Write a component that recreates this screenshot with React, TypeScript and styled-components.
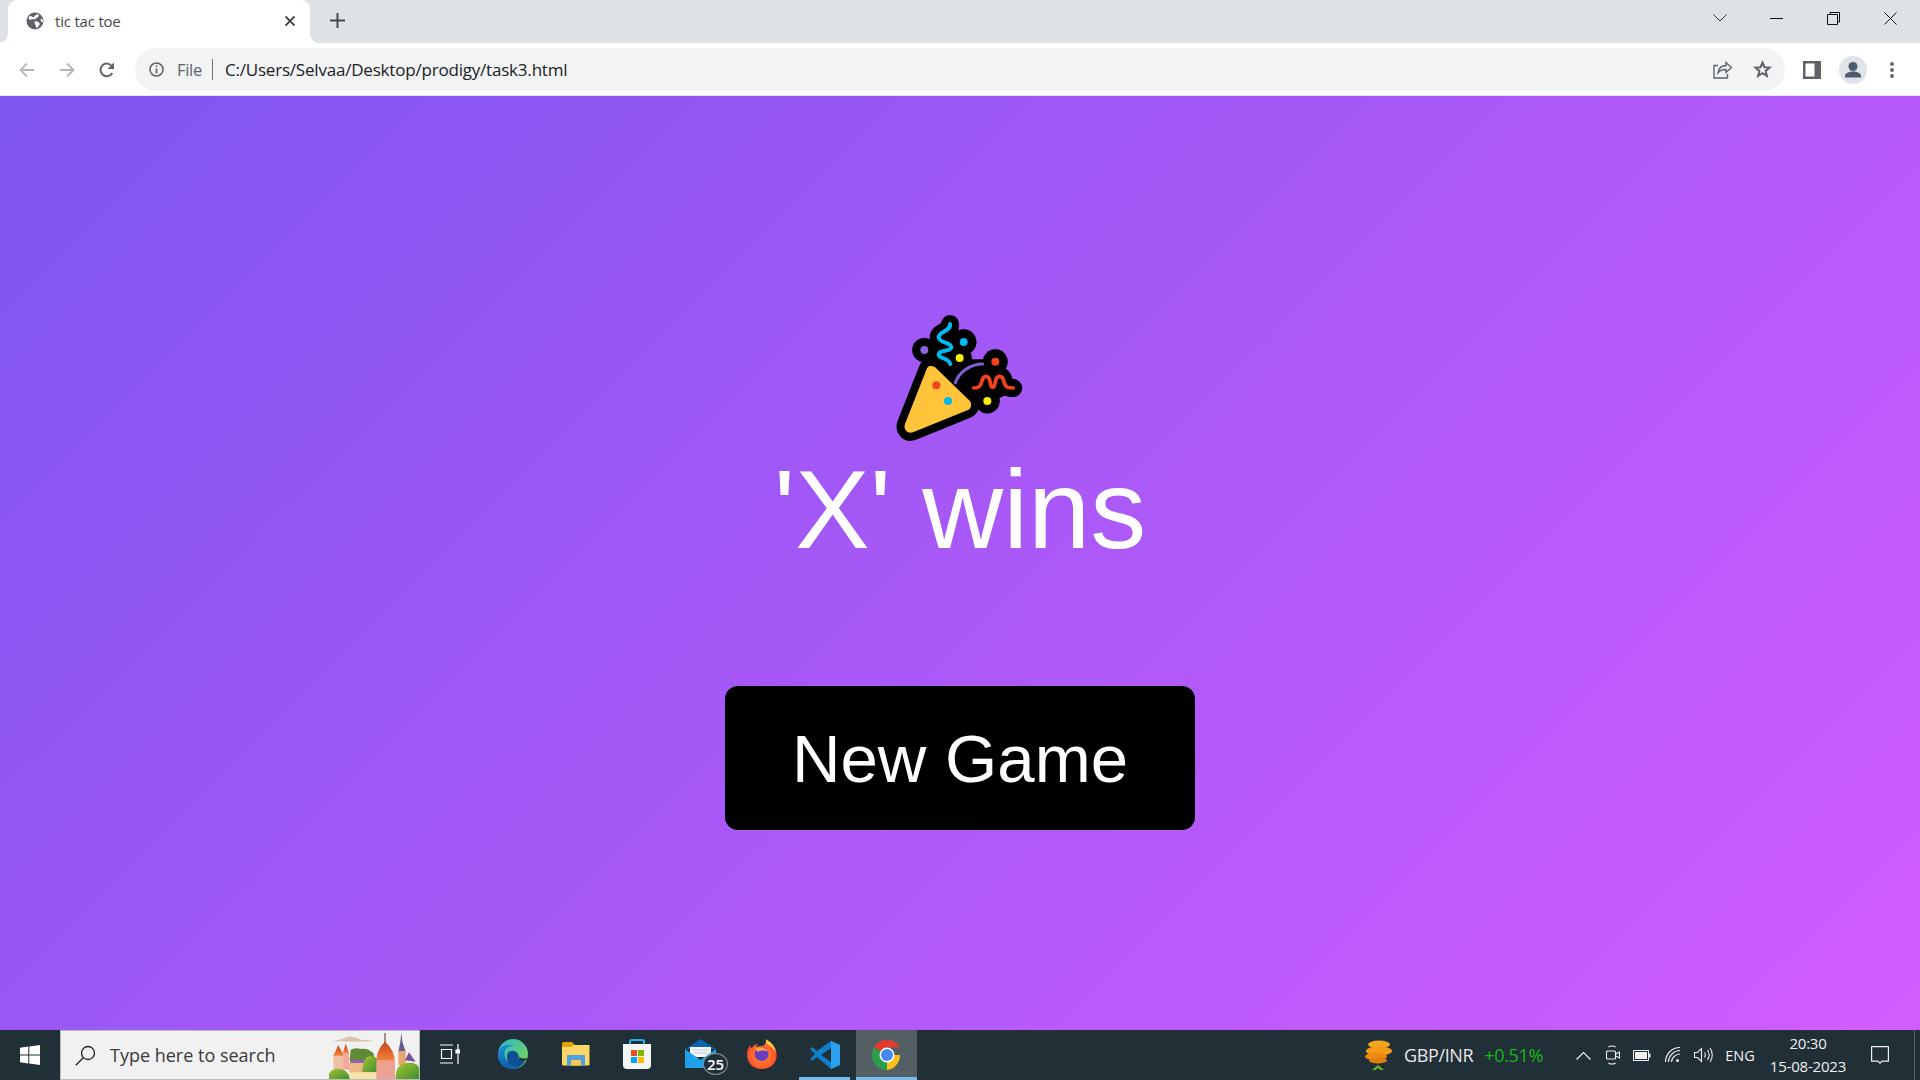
import React from "react";
import styled, { createGlobalStyle } from "styled-components";

const Global = createGlobalStyle`
  html, body { margin: 0; padding: 0; height: 100%; overflow: hidden; }
  #root { height: 100%; }
`;

const Screen = styled.div`
  width: 1920px;
  height: 1080px;
  display: flex;
  flex-direction: column;
  overflow: hidden;
`;

const TabStrip = styled.div`
  height: 43px;
  flex: none;
  background: #dee1e6;
  display: flex;
  align-items: stretch;
  padding-left: 8px;
`;

const Tab = styled.div`
  width: 302px;
  background: #fff;
  border-radius: 9px 9px 0 0;
  display: flex;
  align-items: center;
  padding: 0 14px 2px 18px;
  box-sizing: border-box;
  gap: 11px;
  position: relative;
  &::before,
  &::after {
    content: "";
    position: absolute;
    bottom: 0;
    width: 9px;
    height: 9px;
  }
  &::before {
    left: -9px;
    background: radial-gradient(circle at 0 0, #dee1e6 8.5px, #fff 9px);
  }
  &::after {
    right: -9px;
    background: radial-gradient(circle at 100% 0, #dee1e6 8.5px, #fff 9px);
  }
`;

const TabTitle = styled.span`
  flex: 1;
  font: 15px "Open Sans", sans-serif;
  color: #45484c;
  letter-spacing: -0.2px;
`;

const NewTab = styled.div`
  width: 55px;
  display: flex;
  align-items: center;
  justify-content: center;
  padding-bottom: 2px;
`;

const Spacer = styled.div`
  flex: 1;
`;

const WindowControls = styled.div`
  display: flex;
  align-items: center;
  padding-right: 1px;
  padding-bottom: 7px;
`;

const WindowButton = styled.div<{ $w: number }>`
  width: ${(p) => p.$w}px;
  display: flex;
  justify-content: center;
`;

const Toolbar = styled.div`
  height: 52px;
  flex: none;
  background: #fff;
  display: flex;
  align-items: center;
  padding: 1px 11px 0 7px;
  box-sizing: border-box;
`;

const NavButton = styled.div`
  width: 40px;
  height: 33px;
  display: flex;
  align-items: center;
  justify-content: center;
`;

const Omnibox = styled.div`
  flex: 1;
  height: 43px;
  margin-left: 8px;
  margin-right: 8px;
  border-radius: 22px;
  background: #f1f3f4;
  display: flex;
  align-items: center;
  padding: 0 3px 0 14px;
`;

const FileLabel = styled.span`
  font: 16.5px "Open Sans", sans-serif;
  letter-spacing: -0.3px;
  color: #5f6368;
  margin-left: 13px;
`;

const Separator = styled.span`
  width: 1px;
  height: 21px;
  background: #70757a;
  margin: 0 12px 0 10px;
`;

const Url = styled.span`
  flex: 1;
  font: 17px "Open Sans", sans-serif;
  letter-spacing: -0.2px;
  color: #202124;
`;

const OmniIcon = styled.div`
  width: 40px;
  display: flex;
  justify-content: center;
`;

const ToolIcon = styled.div<{ $w: number }>`
  width: ${(p) => p.$w}px;
  display: flex;
  justify-content: center;
  align-items: center;
`;

const Stage = styled.main`
  flex: 1;
  min-height: 0;
  background: linear-gradient(135deg, #7e55ef, #d25cff);
  display: flex;
  flex-direction: column;
  align-items: center;
  padding-top: 204px;
  box-sizing: border-box;
  border-top: 1px solid #e9e4f7;
`;

const Party = styled.svg`
  width: 160px;
  height: 150px;
  display: block;
  flex: none;
`;

const Winner = styled.h1`
  margin: -4px 0 0;
  font: 400 112px/128px "Liberation Sans", Arial, sans-serif;
  color: #fff;
`;

const NewGame = styled.button`
  width: 470px;
  height: 144px;
  margin-top: 112px;
  background: #000;
  color: #fff;
  border: 0;
  border-radius: 13px;
  font: 400 67.2px "Liberation Sans", Arial, sans-serif;
  padding: 0;
`;

const Taskbar = styled.footer`
  height: 50px;
  flex: none;
  background: #212f37;
  display: flex;
  align-items: stretch;
  color: #fff;
`;

const StartButton = styled.div`
  width: 60px;
  display: flex;
  align-items: center;
  justify-content: center;
`;

const SearchBox = styled.div`
  width: 360px;
  box-sizing: border-box;
  background: #f1f1f1;
  border: 1px solid #bdbdbd;
  display: flex;
  align-items: center;
  padding-left: 14px;
  position: relative;
  overflow: hidden;
`;

const SearchText = styled.span`
  font: 18px "Open Sans", sans-serif;
  color: #3a3a3a;
  margin-left: 14px;
  flex: 1;
`;

const VillageArt = styled.svg`
  position: absolute;
  right: 0;
  bottom: 0;
  width: 90px;
  height: 50px;
`;

const AppSlot = styled.div<{ $w: number; $active?: boolean; $open?: boolean }>`
  width: ${(p) => p.$w}px;
  display: flex;
  align-items: center;
  justify-content: center;
  box-sizing: border-box;
  background: ${(p) => (p.$active ? "#545f63" : "transparent")};
  border-bottom: 3px solid ${(p) => (p.$open ? "#76b9ed" : "transparent")};
  padding-top: ${(p) => (p.$open ? 3 : 0)}px;
  position: relative;
`;

const SlotGap = styled.div<{ $w: number }>`
  width: ${(p) => p.$w}px;
  flex: none;
`;

const Badge = styled.span`
  position: absolute;
  left: 35px;
  top: 23px;
  width: 25px;
  height: 22px;
  box-sizing: border-box;
  border-radius: 50%;
  background: #212f37;
  border: 1px solid #8b9499;
  font: 600 15px/20px "Open Sans", sans-serif;
  text-align: center;
  color: #fff;
`;

const Tray = styled.div`
  display: flex;
  align-items: center;
  flex: 1;
  justify-content: flex-end;
`;

const Pair = styled.span`
  font: 18px "Open Sans", sans-serif;
  letter-spacing: -0.35px;
  color: #e8e8e8;
  margin-left: 12px;
`;

const Change = styled.span`
  font: 18px "Open Sans", sans-serif;
  letter-spacing: -0.35px;
  color: #16b916;
  margin-left: 11px;
  margin-right: 23px;
`;

const TrayIcon = styled.div<{ $w: number }>`
  width: ${(p) => p.$w}px;
  display: flex;
  align-items: center;
  justify-content: center;
`;

const Lang = styled.span`
  width: 36px;
  text-align: center;
  font: 14.5px "Open Sans", sans-serif;
  color: #f0f0f0;
  margin-left: 4px;
`;

const Clock = styled.div`
  width: 86px;
  margin: 0 10px 0 7px;
  text-align: center;
  font: 15px/23px "Open Sans", sans-serif;
  color: #f0f0f0;
  letter-spacing: -0.2px;
`;

const Notify = styled.div`
  width: 38px;
  margin-right: 15px;
  display: flex;
  justify-content: center;
`;

const Grip = styled.div`
  width: 1px;
  align-self: stretch;
  background: #56626a;
  margin-right: 5px;
`;

const Back = () => (
  <svg width="18" height="18" viewBox="0 0 18 18" fill="none" stroke="#b4b6b9" strokeWidth="1.8">
    <path d="M16 9H3M9 2.5 2.5 9 9 15.5" />
  </svg>
);
const Forward = () => (
  <svg width="18" height="18" viewBox="0 0 18 18" fill="none" stroke="#b4b6b9" strokeWidth="1.8">
    <path d="M2 9h13M9 2.5 15.5 9 9 15.5" />
  </svg>
);
const Reload = () => (
  <svg width="18" height="18" viewBox="0 0 18 18" fill="none">
    <path d="M14.3 12a6.3 6.3 0 1 1-.3-6.700" stroke="#5f6368" strokeWidth="2" />
    <path d="M16 1.500V8H9.500z" fill="#5f6368" />
  </svg>
);

const Globe = () => (
  <svg width="18" height="18" viewBox="0 0 18 18">
    <circle cx="9" cy="9" r="8.5" fill="#5f6368" />
    <path d="M3 4.500 5 4l2.500 1.500L9 3.500 12 2l1 2-2.500 2-2 1.500L6 7 4 8 2.500 6.500zM9 9l3.500 1 1.500 2-2 3-1.500 1L9.500 13 8.500 11zM14.500 6.500l2 1 .5 3-2-1z" fill="#fff" />
  </svg>
);

const BLUE_SQUIGGLE = "M210 72c4 22-34 22-34 40 0 18 38 14 38 30 0 14-38 6-38 22 0 12 30 8 35 28";
const RED_SQUIGGLE =
  "M281 264c12 0 20-2 23-15 3-12 5-20 14-20 9 0 11 8 13 20 1 8 3 13 7 13 4 0 6-5 7-13 2-12 4-20 14-20 9 0 11 8 14 20 3 13 12 15 27 15";
const CONE = "M150 198c-4 1-8 4-10 9L75 372c-6 16 8 31 24 25l163-66c12-5 15-19 7-29L170 206c-5-6-12-9-20-8z";
const ARC = "M226 248c10-30 44-56 82-56";

const PartyPopper = () => (
  <Party viewBox="0 0 480 450" aria-hidden="true">
    <g fill="#000" stroke="#000" strokeLinecap="round" strokeLinejoin="round">
      <path d="M170 100 260 120 250 190 345 190 395 262 322 300 260 290 190 210z" strokeWidth="24" />
      <path d={BLUE_SQUIGGLE} fill="none" strokeWidth="54" />
      <path d={RED_SQUIGGLE} fill="none" strokeWidth="54" />
      <path d={CONE} strokeWidth="48" />
      <circle cx="133" cy="150" r="36" />
      <circle cx="251" cy="126" r="38" />
      <circle cx="239" cy="174" r="36" />
      <circle cx="346" cy="185" r="37" />
      <circle cx="322" cy="303" r="37" />
    </g>
    <path d={CONE} fill="#ffc43a" />
    <circle cx="169" cy="256" r="12" fill="#f4411e" />
    <circle cx="204" cy="303" r="12" fill="#00b9f1" />
    <circle cx="133" cy="150" r="12" fill="#8a63dc" />
    <circle cx="251" cy="126" r="12" fill="#00b9f1" />
    <circle cx="239" cy="174" r="12" fill="#fff200" />
    <circle cx="346" cy="185" r="12" fill="#f4411e" />
    <circle cx="322" cy="303" r="12" fill="#fff200" />
    <path d={BLUE_SQUIGGLE} fill="none" stroke="#00b9f1" strokeWidth="12" strokeLinecap="round" />
    <path d={RED_SQUIGGLE} fill="none" stroke="#f4411e" strokeWidth="11" strokeLinecap="round" />
    <path d={ARC} fill="none" stroke="#7f5fd8" strokeWidth="9" strokeLinecap="round" />
  </Party>
);

const Village = () => (
  <VillageArt viewBox="30 6 270 150" aria-hidden="true">
    <defs>
      <linearGradient id="roof" x1="0" y1="0" x2="0" y2="1">
        <stop offset="0" stopColor="#c9431d" />
        <stop offset="1" stopColor="#f08a3c" />
      </linearGradient>
      <linearGradient id="bush" x1="0" y1="0" x2="1" y2="1">
        <stop offset="0" stopColor="#a8c431" />
        <stop offset="1" stopColor="#3f8f2f" />
      </linearGradient>
    </defs>
    <path d="M40 42q30-4 36-8 12-8 28-4 14 2 20 8 24 0 41 4-60 5-125 0z" fill="#d9c3ad" />
    <path d="M95 68q14-8 30-2 20-4 38 12l5 24H92z" fill="#5f8a37" />
    <path d="M90 110l8-12h42l6 12z" fill="#8d62a8" />
    <rect x="90" y="108" width="82" height="48" fill="#eeb98a" />
    <rect x="90" y="136" width="82" height="20" fill="#f4e4a8" />
    <path d="M42 88 58 55 76 88z" fill="url(#roof)" />
    <rect x="43" y="86" width="32" height="46" fill="#eec0a4" />
    <path d="M71 80 80 50 91 80z" fill="url(#roof)" />
    <rect x="73" y="78" width="17" height="50" fill="#f2a99c" />
    <path d="M130 135q0-40 20-48 16-2 25 8v40z" fill="url(#bush)" />
    <rect x="196" y="18" width="4" height="30" fill="#7c5e4d" />
    <path d="M172 104q0-36 26-60 28 24 30 60z" fill="url(#roof)" />
    <rect x="172" y="100" width="56" height="56" fill="#eda193" />
    <path d="M238 74l6-30 3-28 3 28 10 30z" fill="#6b5b8c" />
    <rect x="238" y="72" width="22" height="42" fill="#e3a86f" />
    <path d="M258 100l12-24 20 28z" fill="#7a4f9c" />
    <path d="M230 156q-2-42 30-48 36-4 40 16v32z" fill="url(#bush)" />
    <path d="M28 156q0-30 28-31 32 0 36 31z" fill="url(#bush)" />
  </VillageArt>
);

const Edge = () => (
  <svg width="30" height="30" viewBox="0 0 30 30">
    <defs>
      <linearGradient id="e1" x1="0" y1="0" x2="1" y2="1">
        <stop offset="0" stopColor="#2bb6c9" />
        <stop offset="1" stopColor="#7fd94f" />
      </linearGradient>
      <linearGradient id="e2" x1="0" y1="0" x2="0" y2="1">
        <stop offset="0" stopColor="#1b8fd8" />
        <stop offset="1" stopColor="#0c5fa8" />
      </linearGradient>
    </defs>
    <circle cx="15" cy="15" r="15" fill="url(#e1)" />
    <path d="M0 15C1 6 10 4 16 7c-7 0-11 3-9 11 2 7 13 9 20 5-5 7-11 7-14 7C6 30 0 24 0 15z" fill="url(#e2)" />
    <path d="M9 17c0-6 8-7 11-2 2 4-2 4 2 5h6c-3 6-8 9-13 7-5-2-6-6-6-10z" fill="#0d4f94" />
    <path d="M20 17c3 3 7 3 10 2-1 3-5 3-8 2z" fill="#212f37" />
  </svg>
);

const Explorer = () => (
  <svg width="28" height="24" viewBox="0 0 28 24">
    <path d="M0 1.500C0 .7.7 0 1.500 0H10l3 3h13v18a1 1 0 0 1-1 1H1a1 1 0 0 1-1-1z" fill="#e0a30c" />
    <path d="M0 5h9l3-2h15.500v19.500a1 1 0 0 1-1 1H1a1 1 0 0 1-1-1z" fill="#fcd766" />
    <path d="M5 23.500V13h18v10.500h-4V18H9v5.500z" fill="#4d9fe0" />
    <rect x="9" y="18" width="10" height="5.500" fill="#f7c94d" />
  </svg>
);

const Store = () => (
  <svg width="30" height="30" viewBox="0 0 30 30">
    <path d="M8 6V2.500C8 1.500 9 1 10 1h10c1 0 2 .5 2 1.500V6" fill="none" stroke="#23b2e8" strokeWidth="2" />
    <path d="M1 5h28v21a4 4 0 0 1-4 4H5a4 4 0 0 1-4-4z" fill="#f5f5f5" />
    <rect x="9" y="11" width="6" height="6" fill="#ea4f23" />
    <rect x="16" y="11" width="6" height="6" fill="#7cb800" />
    <rect x="9" y="18" width="6" height="6" fill="#00a5ef" />
    <rect x="16" y="18" width="6" height="6" fill="#ffb900" />
  </svg>
);

const Mail = () => (
  <svg width="31" height="29" viewBox="0 0 31 29">
    <path d="M0 10 15.500 0 31 10z" fill="#0a62b0" />
    <path d="M5 8h21v10H5z" fill="#f5f5f5" />
    <path d="M8 11h15M8 14h15" stroke="#bbccdd" strokeWidth="1" />
    <path d="M0 10l15.500 11L31 10v19H0z" fill="#1ea1ea" />
  </svg>
);

const Firefox = () => (
  <svg width="30" height="30" viewBox="0 0 30 30">
    <defs>
      <radialGradient id="ff" cx=".5" cy=".55" r=".6">
        <stop offset="0" stopColor="#ff9a2e" />
        <stop offset=".7" stopColor="#ff5a2a" />
        <stop offset="1" stopColor="#e5234a" />
      </radialGradient>
    </defs>
    <path d="M19 0c1 4 9 6 10.500 14C31 23 24 30 15 30 6 30 0 24 0 15c0-3 1-6 3-9 0 2 1 3 2 3 1-2 3-4 6-4-1 1-2 2-2 3 3-1 7 0 9-3 1-2 1-3 1-5z" fill="url(#ff)" />
    <circle cx="14.500" cy="15" r="7" fill="#6b3dc4" />
    <path d="M8 10c4-3 11-2 13 3-3-2-8-2-10 0z" fill="#ffa436" />
    <path d="M19 0c4 3 9 6 10 13-3-4-7-7-10-9z" fill="#ffcc3d" />
  </svg>
);

const VSCode = () => (
  <svg width="30" height="30" viewBox="0 0 30 30">
    <path d="M21 1 30 5v20l-9 4-14-12-5 4-2-2 5-5-5-5 2-2 5 4z" fill="#0f7fcb" />
    <path d="M21 1 30 5v20l-9 4z" fill="#2aa1ec" />
    <path d="M21 8 11 15l10 7z" fill="#212f37" />
  </svg>
);

const Chrome = () => (
  <svg width="30" height="30" viewBox="0 0 30 30">
    <path d="M15 15 2 7.500A15 15 0 0 1 28 7.500H15z" fill="#e33b2e" />
    <path d="M15 15 15 30A15 15 0 0 1 2 7.500z" fill="#2b9e49" />
    <path d="M15 15H28A15 15 0 0 1 15 30z" fill="#fbc116" />
    <circle cx="15" cy="15" r="7.500" fill="#fff" />
    <circle cx="15" cy="15" r="6" fill="#4489f1" />
  </svg>
);

const Coins = () => (
  <svg width="28" height="30" viewBox="0 0 28 30">
    <ellipse cx="15" cy="4.500" rx="11" ry="4" fill="#f2a51f" />
    <ellipse cx="15" cy="11" rx="13" ry="4.500" fill="#f79a18" />
    <ellipse cx="12" cy="16.500" rx="11" ry="4" fill="#ee8a12" />
    <ellipse cx="14" cy="20.500" rx="9" ry="3" fill="#e07e10" />
    <path d="M8 30l6-5 6 5h-3.500L14 28l-2.500 2z" fill="#6bb521" />
  </svg>
);

export default function App() {
  return (
    <Screen>
      <Global />
      <TabStrip>
        <Tab>
          <Globe />
          <TabTitle>tic tac toe</TabTitle>
          <svg width="12" height="12" viewBox="0 0 12 12" stroke="#45484c" strokeWidth="1.800">
            <path d="M1.500 1.500l9 9M10.500 1.500l-9 9" />
          </svg>
        </Tab>
        <NewTab>
          <svg width="15" height="15" viewBox="0 0 15 15" stroke="#45484c" strokeWidth="2">
            <path d="M7.500 0v15M0 7.500h15" />
          </svg>
        </NewTab>
        <Spacer />
        <WindowControls>
          <WindowButton $w={57}>
            <svg width="14" height="8" viewBox="0 0 14 8" fill="none" stroke="#333" strokeWidth="1">
              <path d="M.5.500 7 7 13.500.500" />
            </svg>
          </WindowButton>
          <WindowButton $w={57}>
            <svg width="13" height="1" viewBox="0 0 13 1">
              <rect width="13" height="1" fill="#111" />
            </svg>
          </WindowButton>
          <WindowButton $w={57}>
            <svg width="13" height="13" viewBox="0 0 13 13" fill="none" stroke="#111" strokeWidth="1">
              <path d="M3 2.500V.500h9.500V10H10.500M.500 2.500h10v10H.500z" />
            </svg>
          </WindowButton>
          <WindowButton $w={57}>
            <svg width="13" height="13" viewBox="0 0 13 13" stroke="#111" strokeWidth="1">
              <path d="M.5.500l12 12M12.500.500l-12 12" />
            </svg>
          </WindowButton>
        </WindowControls>
      </TabStrip>
      <Toolbar>
        <NavButton>
          <Back />
        </NavButton>
        <NavButton>
          <Forward />
        </NavButton>
        <NavButton>
          <Reload />
        </NavButton>
        <Omnibox>
          <svg width="15" height="15" viewBox="0 0 15 15" fill="none">
            <circle cx="7.500" cy="7.500" r="6.500" stroke="#5f6368" strokeWidth="1.500" />
            <path d="M7.500 6.500V11.500M7.500 3.500v1.600" stroke="#5f6368" strokeWidth="1.700" />
          </svg>
          <FileLabel>File</FileLabel>
          <Separator />
          <Url>C:/Users/Selvaa/Desktop/prodigy/task3.html</Url>
          <OmniIcon>
            <svg width="19" height="19" viewBox="0 0 19 19" fill="none" stroke="#5f6368" strokeWidth="1.400">
              <path d="M5 5.500H1v12.500h13.500v-4" />
              <path d="M5 13c0-5 4-7.500 8-7.500V2.500l5.500 5-5.500 5V9.500c-4 0-6.500 1-8 3.500z" />
            </svg>
          </OmniIcon>
          <OmniIcon>
            <svg width="19" height="19" viewBox="0 0 19 19" fill="none" stroke="#5f6368" strokeWidth="2">
              <path d="M9.500 2.500l2 4.700 5 .4-3.800 3.300 1.200 5-4.400-2.700-4.400 2.700 1.200-5L2.500 7.600l5-.4z" />
            </svg>
          </OmniIcon>
        </Omnibox>
        <ToolIcon $w={38}>
          <svg width="18" height="18" viewBox="0 0 18 18">
            <rect width="18" height="18" fill="#5f6368" />
            <rect x="2.500" y="2.500" width="9" height="13" fill="#fff" />
          </svg>
        </ToolIcon>
        <ToolIcon $w={44}>
          <svg width="28" height="28" viewBox="0 0 28 28">
            <circle cx="14" cy="14" r="14" fill="#e0e3e7" />
            <circle cx="14" cy="10.500" r="4.500" fill="#4d5b6f" />
            <path d="M6 20c0-3 4-4.500 8-4.500s8 1.500 8 4.500v1.500H6z" fill="#4d5b6f" />
          </svg>
        </ToolIcon>
        <ToolIcon $w={34}>
          <svg width="4" height="16" viewBox="0 0 4 16" fill="#5f6368">
            <circle cx="2" cy="2" r="1.900" />
            <circle cx="2" cy="8" r="1.900" />
            <circle cx="2" cy="14" r="1.900" />
          </svg>
        </ToolIcon>
      </Toolbar>
      <Stage>
        <PartyPopper />
        <Winner>'X' wins</Winner>
        <NewGame>New Game</NewGame>
      </Stage>
      <Taskbar>
        <StartButton>
          <svg width="20" height="20" viewBox="0 0 20 20" fill="#fff">
            <path d="M0 2.800 8.300 1.600v7.900H0zM9.300 1.500 20 0v9.500H9.300zM0 10.500h8.300v7.900L0 17.200zM9.300 10.500H20V20L9.300 18.500z" />
          </svg>
        </StartButton>
        <SearchBox>
          <svg width="21" height="21" viewBox="0 0 21 21" fill="none" stroke="#222" strokeWidth="1.300">
            <circle cx="13" cy="8" r="6.500" />
            <path d="M8.300 12.700.8 20.200" />
          </svg>
          <SearchText>Type here to search</SearchText>
          <Village />
        </SearchBox>
        <AppSlot $w={60}>
          <svg width="20" height="20" viewBox="0 0 20 20" fill="none" stroke="#fff" strokeWidth="1.200">
            <path d="M0 1h13M0 19h13M1.500 5.500h10v9h-10zM18 0v6M18 10v10" />
            <rect x="16" y="6" width="3.500" height="3" fill="#fff" />
          </svg>
        </AppSlot>
        <AppSlot $w={66}>
          <Edge />
        </AppSlot>
        <AppSlot $w={60}>
          <Explorer />
        </AppSlot>
        <AppSlot $w={62}>
          <Store />
        </AppSlot>
        <AppSlot $w={64}>
          <Mail />
          <Badge>25</Badge>
        </AppSlot>
        <AppSlot $w={60}>
          <Firefox />
        </AppSlot>
        <SlotGap $w={7} />
        <AppSlot $w={51} $open>
          <VSCode />
        </AppSlot>
        <SlotGap $w={6} />
        <AppSlot $w={61} $active $open>
          <Chrome />
        </AppSlot>
        <Tray>
          <Coins />
          <Pair>GBP/INR</Pair>
          <Change>+0.51%</Change>
          <TrayIcon $w={34}>
            <svg width="15" height="9" viewBox="0 0 15 9" fill="none" stroke="#f0f0f0" strokeWidth="1.200">
              <path d="M.5 8.500 7.500 1.500 14.500 8.500" />
            </svg>
          </TrayIcon>
          <TrayIcon $w={26}>
            <svg width="14" height="20" viewBox="0 0 14 20" fill="none" stroke="#f0f0f0" strokeWidth="1.100">
              <path d="M2.500 2C4 .6 8 .6 9.500 2M2.500 18C4 19.400 8 19.400 9.500 18" />
              <rect x=".5" y="6" width="9" height="8" rx="1" />
              <path d="M9.500 9l4-2v6l-4-2" />
            </svg>
          </TrayIcon>
          <TrayIcon $w={32}>
            <svg width="18" height="11" viewBox="0 0 18 11" fill="none">
              <rect x=".5" y=".5" width="15" height="10" stroke="#f0f0f0" />
              <rect x="2" y="2" width="12" height="7" fill="#f0f0f0" />
              <rect x="16" y="3.500" width="1.500" height="4" fill="#f0f0f0" />
            </svg>
          </TrayIcon>
          <TrayIcon $w={30}>
            <svg width="16" height="16" viewBox="0 0 16 16" fill="none" stroke="#f0f0f0" strokeWidth="1.100">
              <path d="M.5 15C.5 7 7 .5 15 .5M3.500 15C3.500 9 9 3.500 15 3.500M6.500 15c0-4 4-8 8.500-8" />
              <circle cx="12.500" cy="13.500" r="1.500" fill="#f0f0f0" stroke="none" />
            </svg>
          </TrayIcon>
          <TrayIcon $w={30}>
            <svg width="19" height="16" viewBox="0 0 19 16" fill="none" stroke="#f0f0f0" strokeWidth="1.100">
              <path d="M.5 5.500h3l4-4v13l-4-4h-3zM10.500 5.500c1 1.500 1 3.500 0 5M13.500 3c2 3 2 7 0 10M16 1c3 4 3 10 0 14" />
            </svg>
          </TrayIcon>
          <Lang>ENG</Lang>
          <Clock>
            20:30
            <br />
            15-08-2023
          </Clock>
          <Notify>
            <svg width="18" height="18" viewBox="0 0 18 18" fill="none" stroke="#f0f0f0" strokeWidth="1.200">
              <path d="M.6.6h16.800v14.500H11l-2 2-2-2H.6z" />
            </svg>
          </Notify>
          <Grip />
        </Tray>
      </Taskbar>
    </Screen>
  );
}
